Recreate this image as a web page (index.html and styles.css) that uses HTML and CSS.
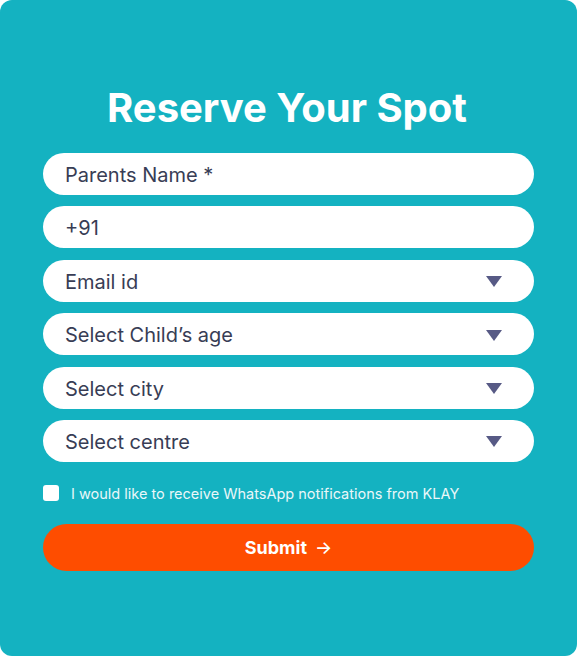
FILE: index.html
```html
<!DOCTYPE html>
<html>
<head>
<meta charset="utf-8">
<link rel="stylesheet" href="styles.css">
</head>
<body>
<div class="card">
  <h1 class="title">Reserve Your Spot</h1>
  <form class="form">
    <div class="field"><span class="label">Parents Name *</span></div>
    <div class="field"><span class="label">+91</span></div>
    <div class="field"><span class="label">Email id</span><span class="caret"></span></div>
    <div class="field"><span class="label">Select Child’s age</span><span class="caret"></span></div>
    <div class="field"><span class="label">Select city</span><span class="caret"></span></div>
    <div class="field"><span class="label">Select centre</span><span class="caret"></span></div>
    <label class="check"><span class="box"></span><span class="check-text">I would like to receive WhatsApp notifications from KLAY</span></label>
    <div class="submit">Submit <span class="arrow">→</span></div>
  </form>
</div>
</body>
</html>
```
FILE: styles.css
```css
* { box-sizing: border-box; }
html, body { margin: 0; padding: 0; background: #fff; }
body { font-family: Inter, "Noto Sans", sans-serif; }
.card {
  width: 577px;
  height: 656px;
  background: #14b2c1;
  border-radius: 12px;
  padding: 84px 43px 0 43px;
}
.title {
  margin: 0 0 0 -3px;
  color: #fff;
  font-size: 40px;
  font-weight: 700;
  text-align: center;
  line-height: 48px;
  height: 69px;
}
.form { display: flex; flex-direction: column; }
.field {
  height: 42px;
  background: #fff;
  border-radius: 21px;
  display: flex;
  align-items: center;
  justify-content: space-between;
  padding: 2px 32px 0 22px;
  margin-bottom: 11.4px;
}
.label { font-size: 20px; color: #383d55; }
.caret {
  width: 0; height: 0;
  border-left: 8px solid transparent;
  border-right: 8px solid transparent;
  border-top: 11px solid #575a85;
}
.check {
  display: flex;
  align-items: center;
  gap: 12px;
  margin-top: 11px;
  height: 18px;
}
.box {
  width: 16px; height: 16px;
  background: #fff;
  border-radius: 3px;
}
.check-text { color: #eaf7f9; font-size: 14.5px; }
.submit {
  margin-top: 22px;
  height: 47px;
  border-radius: 24px;
  background: #fe4d00;
  color: #fff;
  font-weight: 700;
  font-size: 18px;
  display: flex;
  align-items: center;
  justify-content: center;
  gap: 8px;
}
.arrow { font-weight: 500; }
```
